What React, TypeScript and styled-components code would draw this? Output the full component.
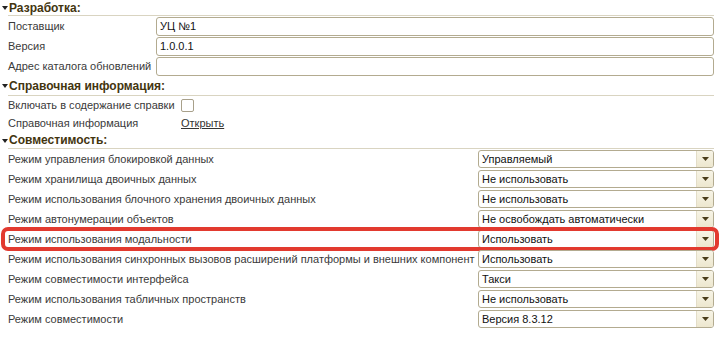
import React from "react";
import styled, { createGlobalStyle } from "styled-components";

const GlobalStyle = createGlobalStyle`
  html, body {
    margin: 0;
    padding: 0;
    background: #fff;
  }
  body {
    font-family: "Liberation Sans", Arial, sans-serif;
    font-size: 11px;
    color: #333;
  }
`;

const Page = styled.div`
  width: 722px;
  height: 339px;
  overflow: hidden;
  background: #fff;
`;

const GroupHeader = styled.div<{ $h: number }>`
  display: flex;
  align-items: stretch;
  height: ${({ $h }) => $h}px;
  padding-left: 2px;
  padding-right: 8px;
`;

const Collapse = styled.svg`
  flex: none;
  width: 6px;
  align-self: center;
`;

const GroupTitle = styled.div`
  flex: 1;
  display: flex;
  align-items: center;
  border-bottom: 1px solid #d9d4c1;
  font-weight: bold;
  font-size: 12px;
  color: #43350f;
  padding-left: 1px;
`;

const Row = styled.div<{ $label: number; $h?: number }>`
  position: relative;
  display: grid;
  grid-template-columns: ${({ $label }) => $label}px 1fr;
  align-items: center;
  height: ${({ $h }) => $h ?? 20}px;
  padding: 0 8px;
`;

const Label = styled.div`
  color: #3a3a3a;
  white-space: nowrap;
`;

const TextField = styled.div`
  box-sizing: border-box;
  height: 19px;
  border: 1px solid #b3ab90;
  border-radius: 3px;
  padding: 0 3px;
  display: flex;
  align-items: center;
  color: #111;
  background: #fff;
`;

const Select = styled.div`
  box-sizing: border-box;
  height: 18px;
  border: 1px solid #b3ab90;
  border-radius: 3px;
  display: flex;
  align-items: stretch;
  background: #fff;
  color: #111;
  overflow: hidden;
`;

const SelectValue = styled.div`
  flex: 1;
  display: flex;
  align-items: center;
  padding-left: 3px;
`;

const SelectButton = styled.div`
  flex: none;
  width: 16px;
  display: flex;
  align-items: center;
  justify-content: center;
  background: linear-gradient(#f7f4e6, #ede7cf);
  border-left: 1px solid #e3ddc8;
`;

const CheckBox = styled.div`
  box-sizing: border-box;
  width: 13px;
  height: 13px;
  border: 1px solid #a8a08a;
  border-radius: 2px;
  background: #fff;
`;

const Link = styled.span`
  color: #333;
  text-decoration: underline;
`;

const Highlight = styled.div`
  position: absolute;
  top: -2px;
  bottom: -2px;
  left: 1px;
  right: 3px;
  border: 4px solid #e23a2f;
  border-radius: 7px;
  pointer-events: none;
`;

const Arrow = () => (
  <svg width="7" height="4" viewBox="0 0 7 4">
    <polygon points="0,0 7,0 3.5,4" fill="#4a3d1a" />
  </svg>
);

const Header = ({ title, h }: { title: string; h: number }) => (
  <GroupHeader $h={h}>
    <Collapse height="4" viewBox="0 0 6 4">
      <polygon points="0,0 6,0 3,4" fill="#222" />
    </Collapse>
    <GroupTitle>{title}</GroupTitle>
  </GroupHeader>
);

const compat: { label: string; value: string; marked?: boolean }[] = [
  { label: "Режим управления блокировкой данных", value: "Управляемый" },
  { label: "Режим хранилища двоичных данных", value: "Не использовать" },
  { label: "Режим использования блочного хранения двоичных данных", value: "Не использовать" },
  { label: "Режим автонумерации объектов", value: "Не освобождать автоматически" },
  { label: "Режим использования модальности", value: "Использовать", marked: true },
  {
    label: "Режим использования синхронных вызовов расширений платформы и внешних компонент",
    value: "Использовать",
  },
  { label: "Режим совместимости интерфейса", value: "Такси" },
  { label: "Режим использования табличных пространств", value: "Не использовать" },
  { label: "Режим совместимости", value: "Версия 8.3.12" },
];

export default function App() {
  return (
    <Page>
      <GlobalStyle />
      <Header title="Разработка:" h={16} />
      <Row $label={148}>
        <Label>Поставщик</Label>
        <TextField>УЦ №1</TextField>
      </Row>
      <Row $label={148}>
        <Label>Версия</Label>
        <TextField>1.0.0.1</TextField>
      </Row>
      <Row $label={148}>
        <Label>Адрес каталога обновлений</Label>
        <TextField />
      </Row>

      <Header title="Справочная информация:" h={20} />
      <Row $label={173} $h={18}>
        <Label>Включать в содержание справки</Label>
        <CheckBox />
      </Row>
      <Row $label={173} $h={18}>
        <Label>Справочная информация</Label>
        <div>
          <Link>Открыть</Link>
        </div>
      </Row>

      <Header title="Совместимость:" h={17} />
      {compat.map((r) => (
        <Row key={r.label} $label={470}>
          <Label>{r.label}</Label>
          <Select>
            <SelectValue>{r.value}</SelectValue>
            <SelectButton>
              <Arrow />
            </SelectButton>
          </Select>
          {r.marked && <Highlight />}
        </Row>
      ))}
    </Page>
  );
}
